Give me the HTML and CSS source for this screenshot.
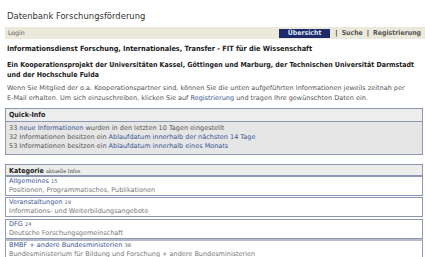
FILE: index.html
```html
<!DOCTYPE html>
<html lang="de">
<head>
<meta charset="utf-8">
<title>Datenbank Forschungsförderung</title>
<link rel="stylesheet" href="styles.css">
</head>
<body>
<div class="page">
  <h1 class="title">Datenbank Forschungsförderung</h1>
  <div class="nav">
    <a class="login" href="#">Login</a>
    <div class="menu">
      <a class="active" href="#">Übersicht</a>
      <span class="sep">|</span>
      <a href="#">Suche</a>
      <span class="sep">|</span>
      <a href="#">Registrierung</a>
    </div>
  </div>
  <div class="intro">
    <h2>Informationsdienst Forschung, Internationales, Transfer - FIT für die Wissenschaft</h2>
    <h3>Ein Kooperationsprojekt der Universitäten Kassel, Göttingen und Marburg, der Technischen Universität Darmstadt und der Hochschule Fulda</h3>
    <p>Wenn Sie Mitglied der o.a. Kooperationspartner sind, können Sie die unten aufgeführten Informationen jeweils zeitnah per <span class="nw">E-Mail</span> erhalten. Um sich einzuschreiben, klicken Sie auf <a href="#">Registrierung</a> und tragen Ihre gewünschten Daten ein.</p>
  </div>
  <div class="box quick">
    <div class="box-head">Quick-Info</div>
    <div class="quick-body">
      <div>33 <a href="#">neue Informationen</a> wurden in den letzten 10 Tagen eingestellt</div>
      <div>32 Informationen besitzen ein <a href="#">Ablaufdatum innerhalb der nächsten 14 Tage</a></div>
      <div>53 Informationen besitzen ein <a href="#">Ablaufdatum innerhalb eines Monats</a></div>
    </div>
  </div>
  <div class="cat">
    <div class="box cat-head">Kategorie <span class="small">aktuelle Infos</span></div>
    <div class="item"><div class="item-title"><a href="#">Allgemeines</a> <span class="count">15</span></div><div class="desc">Positionen, Programmatisches, Publikationen</div></div>
    <div class="item"><div class="item-title"><a href="#">Veranstaltungen</a> <span class="count">19</span></div><div class="desc">Informations- und Weiterbildungsangebote</div></div>
    <div class="item gap"><div class="item-title"><a href="#">DFG</a> <span class="count">24</span></div><div class="desc">Deutsche Forschungsgemeinschaft</div></div>
    <div class="item joined"><div class="item-title"><a href="#">BMBF + andere Bundesministerien</a> <span class="count">38</span></div><div class="desc">Bundesministerium für Bildung und Forschung + andere Bundesministerien</div></div>
  </div>
</div>
</body>
</html>
```
FILE: styles.css
```css
* { box-sizing: border-box; }
html, body { margin: 0; padding: 0; background: #fff; }
body {
  font-family: "DejaVu Sans", Verdana, sans-serif;
  font-size: 6.5px;
  color: #555;
  line-height: 10px;
}
a { color: #3a5694; text-decoration: none; }
.nw { white-space: nowrap; }
.page { padding: 8px 2px 0 5px; }
.title {
  margin: 0 0 0 2px;
  font-family: "DejaVu Sans Condensed", "DejaVu Sans", sans-serif;
  font-stretch: condensed;
  font-size: 9.4px;
  font-weight: normal;
  color: #333;
  line-height: 15px;
}
.nav {
  margin-top: 4px;
  height: 12px;
  background: #ebe8dc;
  display: flex;
  justify-content: space-between;
  align-items: center;
  padding: 0 4px 0 3px;
  margin-right: -2px;
}
.nav .login { color: #555; font-size: 6.2px; }
.menu {
  display: flex;
  align-items: center;
  gap: 4px;
  font-weight: bold;
  font-family: "DejaVu Sans Condensed", "DejaVu Sans", sans-serif;
  font-stretch: condensed;
  font-size: 6.9px;
}
.menu a { color: #555; }
.menu .sep { color: #333; }
.menu .active {
  background: #1d2b6b;
  color: #dfe4f4;
  padding: 0 9px;
  line-height: 9px;
  margin-right: 1px;
}
.intro { padding: 0 0 0 2px; margin-right: -2px; }
.intro h2, .intro h3 {
  font-family: "DejaVu Sans Condensed", "DejaVu Sans", sans-serif;
  font-stretch: condensed;
  color: #222;
}
.intro h2 { margin: 4px 0 0; line-height: 11px; font-size: 7.3px; }
.intro h3 { margin: 6px 0 0; line-height: 10px; font-size: 7px; }
.intro p { margin: 3px 2px 0 0; }
.box { border: 1px solid #8d97b3; }
.quick {
  margin-top: 5px;
  background: #e6e6e6;
}
.box-head, .cat-head {
  font-weight: bold;
  color: #222;
  background: #ededed;
  border-bottom: 1px solid #8d97b3;
  padding: 0 3px;
  line-height: 12px;
  font-family: "DejaVu Sans Condensed", "DejaVu Sans", sans-serif;
  font-stretch: condensed;
  font-size: 7px;
}
.quick-body { padding: 2px 3px 3px; line-height: 9px; }
.cat { margin-top: 9px; }
.cat-head { border-bottom-width: 2px; height: 13px; }
.small { font-weight: normal; font-size: 5.5px; color: #444; font-family: "DejaVu Serif", serif; }
.item {
  border: 1px solid #8d97b3;
  border-top: none;
  padding: 0 3px;
  background: #fff;
}
.item-title, .desc {
  height: 9px;
  line-height: 9px;
  overflow: hidden;
  white-space: nowrap;
}
.item + .item { border-top: 1px solid #8d97b3; margin-top: 1px; }
.item.gap { margin-top: 2px; }
.item.joined { margin-top: 0; border-top: 2px solid #b6bccb; }
.count { font-size: 5.2px; color: #666; }
.desc { color: #777; font-size: 6.5px; }
```
